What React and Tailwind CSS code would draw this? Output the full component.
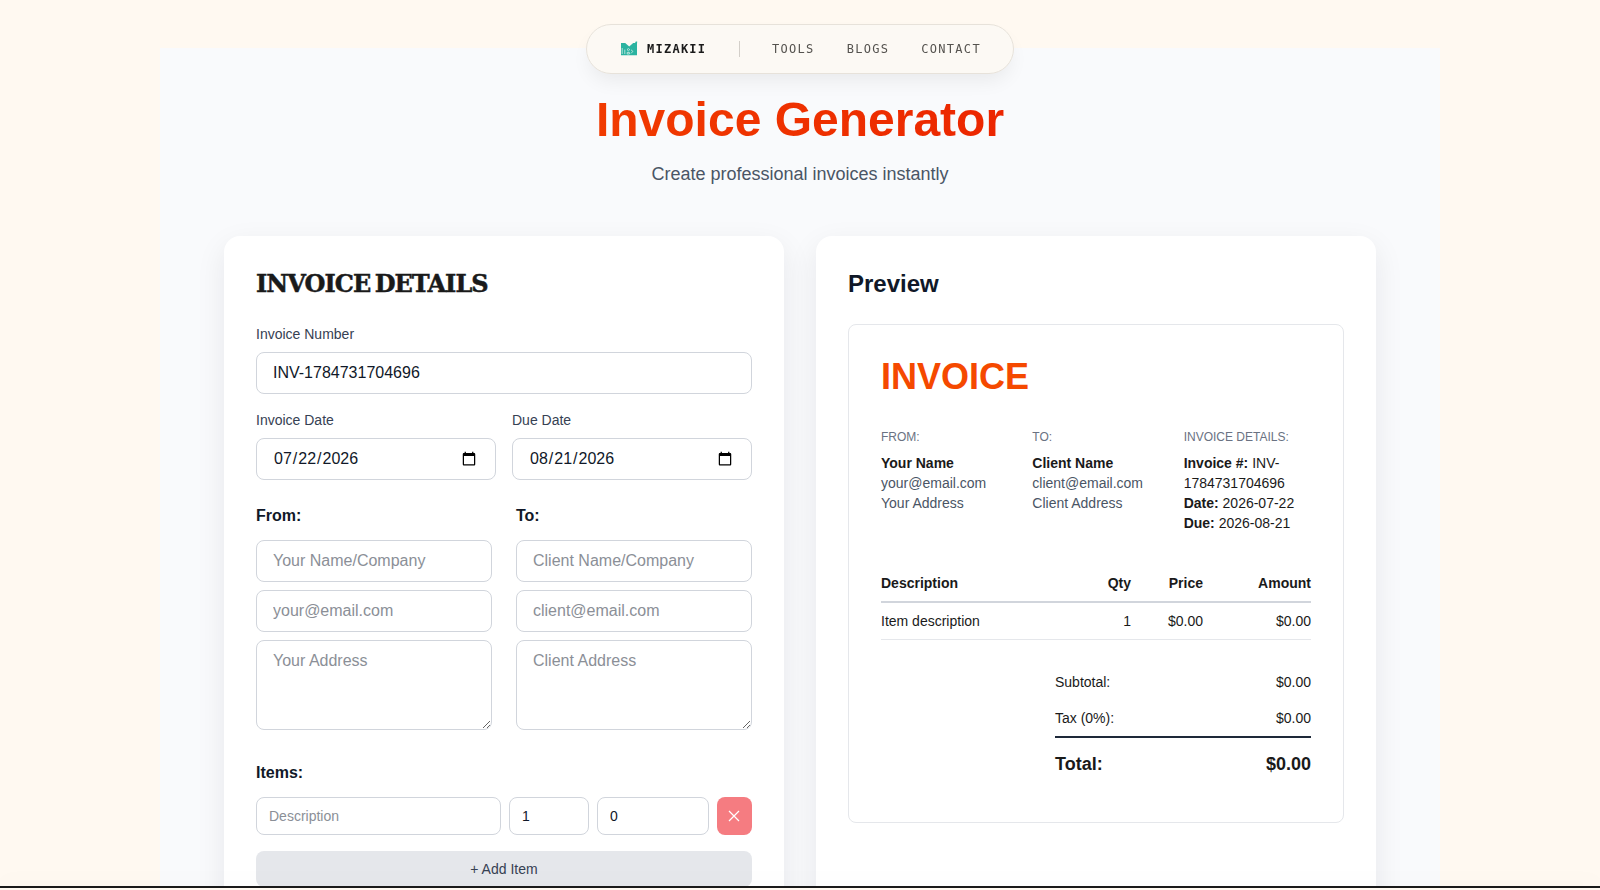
import React, { useState } from 'react';

const NAV_LINKS = ['TOOLS', 'BLOGS', 'CONTACT'];

const FIELD = 'block w-full px-4 py-2 border border-gray-300 rounded-lg text-[16px] leading-6 placeholder:text-[#8b8f97]';
const ITEM_FIELD = 'block h-[38px] px-3 border border-gray-300 rounded-lg text-sm placeholder:text-[#8b8f97]';

const money = (n) => `$${n.toFixed(2)}`;

function Logo() {
  return (
    <svg className="mb-[2px]" width="17" height="15" viewBox="0 0 17 15" fill="none">
      <path d="M0 2h4.2L8.2 5.6l4-3.6H14l.8-1.6h1.4L16 3v11.2H0z" fill="#2bb3a0" />
      <path d="M1.2 7v6M3.8 8.6v4.4M6 8.6l1.4-1 1.4 1-1.4 1.2zM6.2 11.4h2.2v1.6H6.2zM10 8.8l1.9 1.6L10 12.4" stroke="#d3eee7" strokeWidth="0.8" />
    </svg>
  );
}

function Navbar() {
  return (
    <nav className="fixed top-6 left-1/2 -translate-x-1/2 z-20 w-[428px] h-[50px] pl-[34px] pr-8 flex items-center rounded-full border border-[#e7e2da] bg-[#fcf9f4] shadow-[0_10px_20px_-4px_rgba(0,0,0,0.07)] font-['DejaVu_Sans_Mono','Liberation_Mono',monospace] text-[12px]">
      <Logo />
      <span className="ml-[9px] w-[61px] font-bold tracking-[1.25px] text-[#1a1a1a]">MIZAKII</span>
      <span className="ml-[31px] h-4 w-px bg-[#d3cfc9]" />
      <div className="ml-8 flex gap-8 tracking-[1.3px] text-[#55534f]">
        {NAV_LINKS.map((link) => <a key={link}>{link}</a>)}
      </div>
    </nav>
  );
}

function Party({ title, prefix, email }) {
  return (
    <div>
      <h3 className="font-bold mb-3 leading-6">{title}</h3>
      <div className="space-y-2">
        <input className={FIELD} placeholder={`${prefix} Name/Company`} />
        <input className={FIELD} placeholder={email} />
        <textarea className={`${FIELD} h-[90px] resize`} placeholder={`${prefix} Address`} />
      </div>
    </div>
  );
}

function DetailsForm({ invoice, setInvoice }) {
  const update = (key) => (e) => setInvoice({ ...invoice, [key]: e.target.value });

  return (
    <div className="bg-white rounded-2xl p-8 h-[900px] shadow-[0_10px_30px_rgba(15,23,42,0.08)]">
      <h2 className="font-['DejaVu_Serif',serif] font-bold text-[24px] leading-8 tracking-[-0.95px] [word-spacing:-3px] [-webkit-text-stroke:0.5px_#1a1a1a] text-[#1a1a1a] mb-6 whitespace-nowrap">
        INVOICE DETAILS
      </h2>

      <label className="block text-sm text-gray-700 mb-2">Invoice Number</label>
      <input className={FIELD} value={invoice.number} onChange={update('number')} />

      <div className="grid grid-cols-2 gap-4 mt-4">
        <div>
          <label className="block text-sm text-gray-700 mb-2">Invoice Date</label>
          <input type="date" className={`${FIELD} h-[42px]`} value={invoice.date} onChange={update('date')} />
        </div>
        <div>
          <label className="block text-sm text-gray-700 mb-2">Due Date</label>
          <input type="date" className={`${FIELD} h-[42px]`} value={invoice.due} onChange={update('due')} />
        </div>
      </div>

      <div className="grid grid-cols-2 gap-6 mt-6">
        <Party title="From:" prefix="Your" email="your@email.com" />
        <Party title="To:" prefix="Client" email="client@email.com" />
      </div>

      <h3 className="font-bold mt-[31px] mb-3 leading-6">Items:</h3>
      <div className="flex gap-2">
        <input className={`${ITEM_FIELD} w-[245px]`} placeholder="Description" />
        <input className={`${ITEM_FIELD} w-20`} defaultValue="1" />
        <input className={`${ITEM_FIELD} w-28`} defaultValue="0" />
        <button className="flex-1 h-[38px] pr-px flex items-center justify-center rounded-lg bg-[#f57c81]">
          <svg width="12" height="12" viewBox="0 0 12 12" stroke="#fff" strokeWidth="1.2">
            <path d="M1 1l10 10M11 1L1 11" />
          </svg>
        </button>
      </div>
      <button className="mt-4 w-full h-9 rounded-lg bg-gray-200 text-sm text-gray-700">+ Add Item</button>
    </div>
  );
}

function Preview({ invoice }) {
  return (
    <div className="bg-white rounded-2xl p-8 h-[900px] shadow-[0_10px_30px_rgba(15,23,42,0.08)]">
      <h2 className="font-bold text-2xl leading-8 mb-6">Preview</h2>

      <div className="border border-gray-200 rounded-lg p-8 h-[499px] text-sm text-[#1a1a1a]">
        <h1 className="text-4xl font-bold text-[#f54900] mb-8">INVOICE</h1>

        <div className="grid grid-cols-3 gap-6 mb-8">
          <div>
            <p className="text-xs text-gray-500 mb-2">FROM:</p>
            <p className="font-bold">Your Name</p>
            <p className="text-gray-600">your@email.com</p>
            <p className="text-gray-600">Your Address</p>
          </div>
          <div>
            <p className="text-xs text-gray-500 mb-2">TO:</p>
            <p className="font-bold">Client Name</p>
            <p className="text-gray-600">client@email.com</p>
            <p className="text-gray-600">Client Address</p>
          </div>
          <div>
            <p className="text-xs text-gray-500 mb-2">INVOICE DETAILS:</p>
            <p><strong>Invoice #:</strong> {invoice.number}</p>
            <p><strong>Date:</strong> {invoice.date}</p>
            <p><strong>Due:</strong> {invoice.due}</p>
          </div>
        </div>

        <table className="w-full mb-6">
          <thead>
            <tr className="border-b-2 border-gray-300">
              <th className="text-left py-2">Description</th>
              <th className="text-right py-2 w-[72px]">Qty</th>
              <th className="text-right py-2 w-[72px]">Price</th>
              <th className="text-right py-2 w-[108px]">Amount</th>
            </tr>
          </thead>
          <tbody>
            <tr className="border-b border-gray-200">
              <td className="py-2">Item description</td>
              <td className="text-right py-2">1</td>
              <td className="text-right py-2">{money(0)}</td>
              <td className="text-right py-2">{money(0)}</td>
            </tr>
          </tbody>
        </table>

        <div className="ml-auto w-64">
          <div className="flex justify-between py-2"><span>Subtotal:</span><span>{money(0)}</span></div>
          <div className="flex justify-between py-2"><span>Tax (0%):</span><span>{money(0)}</span></div>
          <div className="flex justify-between py-3 border-t-2 border-gray-800 font-bold text-lg">
            <span>Total:</span>
            <span>{money(0)}</span>
          </div>
        </div>
      </div>
    </div>
  );
}

export default function App() {
  const [invoice, setInvoice] = useState({ number: 'INV-1784731704696', date: '2026-07-22', due: '2026-08-21' });

  return (
    <div className="h-[890px] overflow-hidden bg-[#fff9f1] pt-12 font-['Liberation_Sans',Arial,sans-serif] text-gray-900">
      <Navbar />
      <main className="mx-auto w-[1280px] px-16 pt-[42px] h-[842px] bg-[#f9fafc]">
        <header className="text-center mb-12">
          <h1 className="text-5xl leading-[60px] font-bold bg-gradient-to-r from-[#f54900] to-[#e70000] bg-clip-text text-transparent">
            Invoice Generator
          </h1>
          <p className="mt-[10px] text-lg text-gray-600">Create professional invoices instantly</p>
        </header>
        <div className="grid grid-cols-2 gap-8">
          <DetailsForm invoice={invoice} setInvoice={setInvoice} />
          <Preview invoice={invoice} />
        </div>
      </main>
      <div className="fixed bottom-0 inset-x-0 z-20 h-1 border-t-2 border-[#1a1a1a] bg-[#fff9f1] shadow-[0_-4px_20px_rgba(0,0,0,0.05)]" />
    </div>
  );
}
